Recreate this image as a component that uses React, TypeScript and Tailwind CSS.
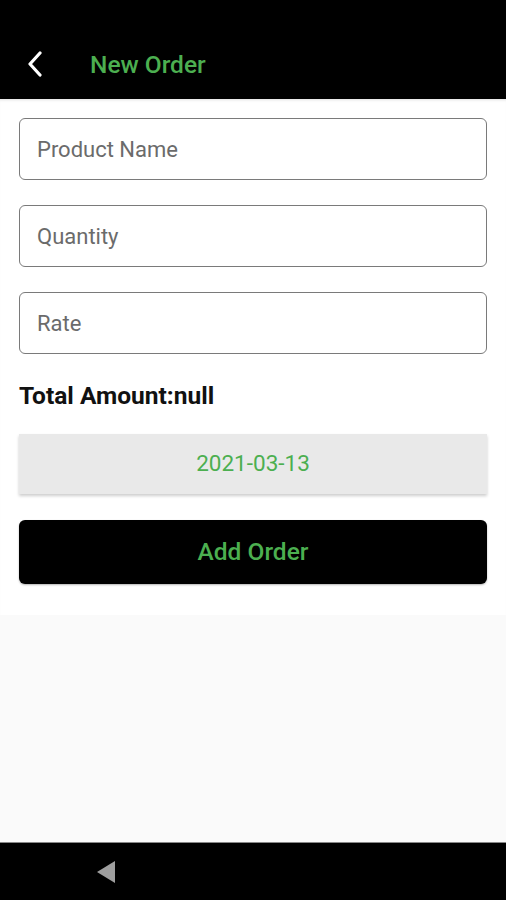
import React from "react";

function Field({ placeholder }: { placeholder: string }) {
  return (
    <div className="h-[62px] rounded-[6px] border-[1.5px] border-[#7a7a7a] bg-white flex items-center px-[17px]">
      <span className="text-[22px] text-[#6b6b6b]">{placeholder}</span>
    </div>
  );
}

export default function App() {
  return (
    <div
      className="w-[506px] h-[900px] flex flex-col overflow-hidden"
      style={{ fontFamily: "Roboto, 'Noto Sans', sans-serif" }}
    >
      <header className="h-[99px] bg-black flex items-end pb-[20px] pl-[26px] shrink-0">
        <svg width="18" height="26" viewBox="0 0 18 26" className="mb-[2px]">
          <path d="M14 2 L4 13 L14 24" fill="none" stroke="white" strokeWidth="3.2" strokeLinecap="round" strokeLinejoin="round" />
        </svg>
        <span className="ml-[46px] text-[24.5px] font-medium text-[#4caf50] leading-[28px]">New Order</span>
      </header>
      <main className="bg-white px-[19px] pt-[19px] pb-[31px] flex flex-col shrink-0 shadow-[inset_0_3px_3px_-2px_rgba(0,0,0,0.12)]">
        <div className="flex flex-col gap-[25px]">
          <Field placeholder="Product Name" />
          <Field placeholder="Quantity" />
          <Field placeholder="Rate" />
        </div>
        <div className="mt-[28px] text-[24.5px] font-bold text-[#111] leading-[28px]">Total Amount:null</div>
        <button className="mt-[24px] h-[60px] w-full bg-[#e9e9e9] shadow-[0_2px_3px_rgba(0,0,0,0.2)] flex items-center justify-center text-[22.5px] text-[#4caf50]">
          2021-03-13
        </button>
        <button className="mt-[26px] h-[64px] w-full bg-black rounded-[6px] flex items-center justify-center text-[24.5px] font-medium text-[#4caf50] shadow-[0_1px_2px_rgba(0,0,0,0.3)]">
          Add Order
        </button>
      </main>
      <div className="flex-1 bg-[#fafafa]" />
      <nav className="h-[58px] bg-black shrink-0 flex items-center pl-[97px] border-t border-[#888]">
        <svg width="18" height="22" viewBox="0 0 18 22">
          <path d="M18 0 L18 22 L0 11 Z" fill="#9e9e9e" />
        </svg>
      </nav>
    </div>
  );
}
